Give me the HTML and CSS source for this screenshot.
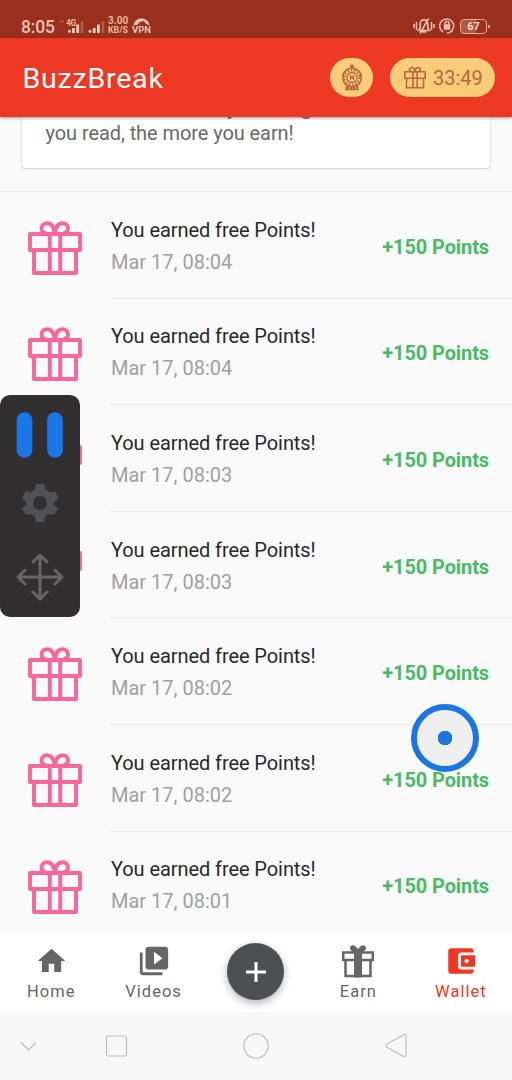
FILE: index.html
```html
<!DOCTYPE html>
<html lang="en">
<head>
<meta charset="utf-8">
<title>BuzzBreak</title>
<link rel="stylesheet" href="styles.css">
</head>
<body>
<svg class="defs" width="0" height="0">
  <symbol id="gift" viewBox="0 0 54 54">
    <g fill="none" stroke="currentColor" stroke-width="3.900" stroke-linejoin="round">
      <path d="M2 13H52V29H2ZM6 29V52H48V29M21.800 13V52M32.200 13V52"/>
      <path d="M26.800 13H20C10.500 11.500 12.500 2.300 19 2.300C23.500 2.300 26 5.500 26.800 13C27.600 5.500 30.200 2.300 34.600 2.300C41 2.300 43 11.500 33.600 13"/>
    </g>
  </symbol>
</svg>
<div class="screen">
  <header class="status">
    <span class="clock">8:05</span>
    <svg class="signals" width="47" height="20" viewBox="0 0 47 20">
      <path d="M1.500 2v3M4 2v3" stroke="#b76c58" stroke-width="1"/>
      <text x="7" y="7.500" class="fourg">4G</text>
      <g fill="#f1cbbb"><circle cx="10.500" cy="13.200" r="1.500"/><rect x="13" y="10" width="2.800" height="5"/><rect x="17.300" y="6.500" width="2.800" height="8.500"/><circle cx="31" cy="13.200" r="1.500"/><rect x="33.800" y="10" width="2.800" height="5"/><rect x="38" y="6.500" width="2.800" height="8.500"/></g>
      <path d="M23 3v12M44 3v12" stroke="#ae5e43" stroke-width="2.500"/>
    </svg>
    <span class="speed"><b>3.00</b><b>KB/S</b></span>
    <span class="vpn">
      <svg width="17" height="9" viewBox="0 0 17 9"><path d="M1 8A7.700 7.700 0 0 1 16 8L13 7L11 4L7 5L4 8Z" fill="#edc2b8"/><path d="M1 8A7.700 7.700 0 0 1 16 8" fill="none" stroke="#edc2b8" stroke-width="1.500"/></svg>
      <b>VPN</b>
    </span>
    <span class="tray">
      <svg width="22" height="18" viewBox="0 0 22 18" fill="none" stroke="#e9bdae" stroke-width="1.600"><path d="M1 7v4M3.500 5v8M18.500 5v8M21 7v4M5.500 13.500H16.500L14.800 11V7C14.800 1.500 7.200 1.500 7.200 7V11ZM15.500 1.500L7 16.500M9 15h4"/></svg>
      <svg width="16" height="16" viewBox="0 0 16 16" fill="none" stroke="#e9bdae" stroke-width="1.500"><path d="M4 14A7 7 0 1 1 8 15M12 14L13.500 12"/><rect x="5.500" y="7" width="5" height="4" fill="#e9bdae"/><path d="M6 7V5.500a2 2 0 0 1 4 0V7"/></svg>
      <span class="battery">67</span><i class="cap"></i>
    </span>
  </header>
  <div class="appbar">
    <h1>BuzzBreak</h1>
    <span class="wheel">
      <svg width="22" height="27" viewBox="0 0 22 27" fill="none" stroke="#b4683f"><circle cx="11" cy="13.500" r="9.300" stroke-width="1.700"/><circle cx="11" cy="13.500" r="7.300" stroke-width="2" stroke-dasharray="1.600 1.700"/><circle cx="11" cy="13.500" r="5" stroke-width="1.300"/><path d="M9.500 12v3l3-3v3ZM9 1.500L11 4L13 1.500M11 0v4M6 21.500L4.800 25.500H17.200L16 21.500" stroke-width="1.300"/><path d="M6 24h10" stroke-width="2" stroke-dasharray="2 1"/></svg>
    </span>
    <span class="timer"><svg width="22" height="23"><use href="#gift"/></svg>33:49</span>
  </div>
  <main class="content">
    <section class="intro"><p>Read more here and you can get. The more<br>you read, the more you earn!</p></section>
    <ul class="history">
      <li><svg class="gift"><use href="#gift"/></svg><div class="entry"><div><h2>You earned free Points!</h2><time>Mar 17, 08:04</time></div><strong>+150 Points</strong></div></li>
      <li><svg class="gift"><use href="#gift"/></svg><div class="entry"><div><h2>You earned free Points!</h2><time>Mar 17, 08:04</time></div><strong>+150 Points</strong></div></li>
      <li><svg class="gift"><use href="#gift"/></svg><div class="entry"><div><h2>You earned free Points!</h2><time>Mar 17, 08:03</time></div><strong>+150 Points</strong></div></li>
      <li><svg class="gift"><use href="#gift"/></svg><div class="entry"><div><h2>You earned free Points!</h2><time>Mar 17, 08:03</time></div><strong>+150 Points</strong></div></li>
      <li><svg class="gift"><use href="#gift"/></svg><div class="entry"><div><h2>You earned free Points!</h2><time>Mar 17, 08:02</time></div><strong>+150 Points</strong></div></li>
      <li><svg class="gift"><use href="#gift"/></svg><div class="entry"><div><h2>You earned free Points!</h2><time>Mar 17, 08:02</time></div><strong>+150 Points</strong></div></li>
      <li><svg class="gift"><use href="#gift"/></svg><div class="entry"><div><h2>You earned free Points!</h2><time>Mar 17, 08:01</time></div><strong>+150 Points</strong></div></li>
    </ul>
  </main>
  <nav class="tabs">
    <a><svg width="33" height="34" viewBox="0 0 24 24" fill="currentColor"><path d="M10 20v-6h4v6h5v-8h3L12 3 2 12h3v8z"/></svg>Home</a>
    <a><svg width="34" height="34" viewBox="0 0 24 24" fill="currentColor"><path d="M4 6H2v14c0 1.100.9 2 2 2h14v-2H4V6zm16-4H8c-1.100 0-2 .9-2 2v12c0 1.100.9 2 2 2h12c1.100 0 2-.9 2-2V4c0-1.100-.9-2-2-2zm-8 12.500v-9l6 4.500-6 4.500z"/></svg>Videos</a>
    <a class="add"><span><svg width="22" height="22" viewBox="0 0 22 22"><path d="M11 1v20M1 11h20" stroke="#fff" stroke-width="3"/></svg></span></a>
    <a><svg width="34" height="34" viewBox="0 0 34 34" fill="none" stroke="currentColor" stroke-width="2.500"><path d="M2.200 8.500H31.800V16H2.200ZM4.500 16V32H29.500V16"/><path d="M13.500 8h7v25h-7ZM17 8C17 2 9.500-.5 9.500 4C9.500 6 11 8 17 8C23 8 24.500 6 24.500 4C24.500-.5 17 2 17 8" fill="currentColor" stroke-width="1"/></svg>Earn</a>
    <a class="active"><svg width="34" height="34" viewBox="0 0 24 24" fill="currentColor"><path d="M21 18v1c0 1.100-.9 2-2 2H5c-1.110 0-2-.9-2-2V5c0-1.100.89-2 2-2h14c1.100 0 2 .9 2 2v1h-9c-1.110 0-2 .9-2 2v8c0 1.100.89 2 2 2h9zm-9-2h10V8H12v8zm4-2.500c-.83 0-1.500-.67-1.500-1.500s.67-1.500 1.500-1.500 1.500.67 1.500 1.500-.67 1.500-1.500 1.500z"/></svg>Wallet</a>
  </nav>
  <footer class="sysnav">
    <svg width="512" height="68" viewBox="0 0 512 68" fill="none" stroke="#bdb9b9" stroke-width="1.100"><path d="M21 30.500L28.500 38L36 30.500"/><rect x="106.500" y="24" width="20" height="20" rx="1.500"/><circle cx="256" cy="34" r="12.200"/><path d="M404 22.500Q406 22 406 24V43Q406 45.500 403.500 44.500L386.500 35Q384.500 33.700 386.500 32.300Z"/></svg>
  </footer>
  <aside class="recorder">
    <svg width="80" height="222" viewBox="0 0 80 222"><path d="M24.500 25V55M55 25V55" stroke="#1b76e8" stroke-width="15.700" stroke-linecap="round"/>
      <g transform="translate(40 108)" fill="#505254"><path fill-rule="evenodd" d="M-4-19H4L6-13L10-10.500L15-12L18.500-5L14-1V2L18 6L14 12L8.500 11L5 13.500L4 19H-4L-5 13.500L-9 11L-14 12L-18 6L-14 2V-1L-18-5L-14-12L-9-10.500L-5.500-13ZM0-7A7 7 0 1 0 0 7A7 7 0 1 0 0-7Z"/></g>
      <path d="M40 161V203M19 182H61M33 167L40 160L47 167M33 197L40 204L47 197M25 175L18 182L25 189M55 175L62 182L55 189" fill="none" stroke="#666" stroke-width="3" stroke-linecap="round" stroke-linejoin="round"/>
    </svg>
  </aside>
  <span class="touch"></span>
</div>
</body>
</html>
```
FILE: styles.css
```css
* { box-sizing: border-box; }
body { margin: 0; font-family: Roboto, "Liberation Sans", sans-serif; }
h1, h2, p, ul { margin: 0; padding: 0; font-weight: 400; }
svg { display: block; flex: none; }
.defs { position: absolute; }
.screen { position: relative; display: flex; flex-direction: column; width: 512px; height: 1080px; overflow: hidden; background: #fafafa; }

.status { display: flex; align-items: flex-start; height: 38px; padding: 17px 22px 0 21px; background: #992f1c; color: #edc2b8; }
.clock { width: 38px; font-size: 17.500px; line-height: 20px; font-weight: 500; letter-spacing: -.2px; }
.signals { overflow: visible; margin: 1px 0 0; }
.fourg { font-size: 8.500px; font-weight: 700; fill: #edb79c; letter-spacing: -.5px; }
.speed { display: flex; flex-direction: column; width: 24px; margin-left: 2px; font-size: 9px; line-height: 8.500px; color: #ecba98; white-space: nowrap; }
.speed b:first-child { font-size: 10px; }
.speed b:last-child { font-size: 8.800px; }
.vpn { display: flex; flex-direction: column; align-items: center; width: 19px; font-size: 9.500px; line-height: 8px; }
.tray { display: flex; align-items: center; gap: 4px; height: 18px; margin-left: auto; }
.battery { width: 27px; height: 15px; margin-left: 1px; border: 1.300px solid #e9aa8d; border-radius: 4px; background: linear-gradient(90deg, #ae5a42 60%, #992f1c 60%); color: #f7d9cf; font-size: 11px; font-weight: 700; line-height: 13px; text-align: center; }
.cap { width: 2px; height: 3px; margin: 0 0 0 -3px; background: #e9aa8d; }

.appbar { display: flex; align-items: center; height: 79px; padding: 0 17px 0 22.500px; background: #ed3823; color: #fff; position: relative; z-index: 1; box-shadow: 0 1px 3px rgba(0,0,0,.4); }
.appbar h1 { flex: 1; padding-top: 3px; font-size: 28.500px; line-height: 34px; letter-spacing: .8px; }
.wheel { display: flex; align-items: center; justify-content: center; width: 43px; height: 39px; margin-right: 17px; border-radius: 20px; background: #f8cc78; }
.timer { display: flex; align-items: center; gap: 7px; width: 105px; height: 39px; padding-left: 14px; border-radius: 20px; background: #f8cc78; color: #b4683f; font-size: 20px; }

.content { flex: 1; min-height: 0; overflow: hidden; }
.intro { display: flex; align-items: flex-end; width: 468px; height: 91px; margin: -40px 0 23px 22px; padding: 0 0 22px 23.500px; border-radius: 3px; background: #fff; box-shadow: 0 0 2px rgba(0,0,0,.22), 0 1px 2px rgba(0,0,0,.1); color: #696969; font-size: 20px; line-height: 25px; letter-spacing: -.08px; white-space: nowrap; }
.history { list-style: none; border-top: 1px solid #ededed; }
.history li { display: flex; height: 106.600px; padding-left: 28px; }
.gift { width: 54px; height: 54px; margin: 28.500px 29px 0 0; color: #f7679a; }
.entry { display: flex; flex: 1; justify-content: space-between; align-items: center; padding: 0 23px 0 0; border-bottom: 1px solid #ededed; }
.entry h2 { margin-top: 3px; font-size: 20px; line-height: 32px; letter-spacing: -.08px; color: #292929; }
.entry time { display: block; font-size: 20px; line-height: 33px; color: #a0a0a0; }
.entry strong { font-size: 20px; font-weight: 700; letter-spacing: -.1px; color: #49bb65; padding-top: 4px; }

.tabs { display: grid; grid-template-columns: repeat(5, 1fr); height: 80px; background: #fff; color: #666; }
.tabs a { display: flex; flex-direction: column; align-items: center; padding-top: 12px; font-size: 16.500px; line-height: 20px; letter-spacing: 1px; }
.tabs a svg { height: 34px; margin-bottom: 4px; }
.tabs .active { color: #ed3823; }
.tabs .add { padding-top: 11px; }
.tabs .add span { display: flex; align-items: center; justify-content: center; width: 57px; height: 57px; border-radius: 50%; background: #4d4f50; box-shadow: 0 3px 8px rgba(0,0,0,.3); }
.tabs .add svg { height: 22px; margin: 0; }
.sysnav { height: 68px; background: #f8f8f8; }

.recorder { position: absolute; z-index: 2; left: 0; top: 395px; width: 80px; height: 222px; border-radius: 10px; background: #322f30; }
.touch { position: absolute; z-index: 2; left: 411px; top: 704px; width: 68px; height: 68px; border: 6px solid #1b76e2; border-radius: 50%; background: radial-gradient(circle, #1b76e2 7px, #efefef 7.500px); }
```
